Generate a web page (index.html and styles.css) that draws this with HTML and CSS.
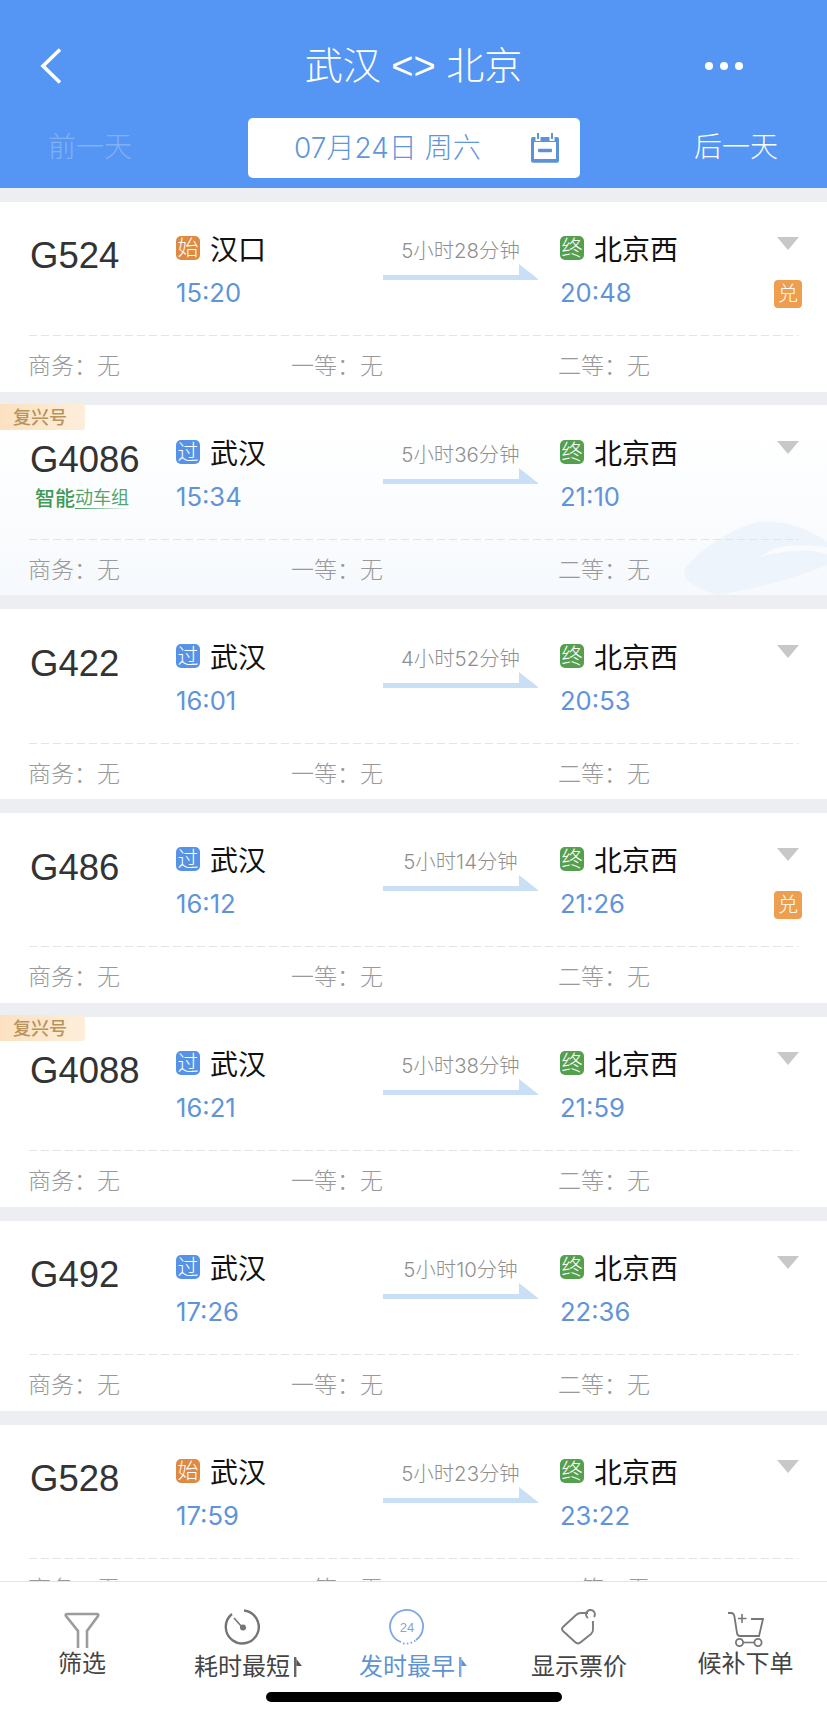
FILE: index.html
```html
<!DOCTYPE html>
<html lang="zh-CN">
<head>
<meta charset="utf-8">
<title>武汉 &lt;&gt; 北京</title>
<link rel="stylesheet" href="styles.css">
</head>
<body>
<div class="app">
  <header class="header">
    <div class="topbar">
      <svg class="back" viewBox="0 0 24 36" width="24" height="36"><path d="M21 1.500 L4 18 L21 34.500" fill="none" stroke="#fff" stroke-width="3.600"/></svg>
      <div class="title">武汉 &lt;&gt; 北京</div>
      <div class="dots"><i></i><i></i><i></i></div>
    </div>
    <div class="daterow">
      <div class="day day-prev">前一天</div>
      <div class="datebox">
        <span>07月24日 周六</span>
        <svg viewBox="0 0 30 30" width="30" height="30"><rect x="1" y="4" width="28" height="25.700" rx="2" fill="#5b93d6"/><rect x="4" y="9" width="22" height="17" fill="#fff"/><rect x="8" y="15.700" width="14" height="3.600" rx="1" fill="#5b93d6"/><path d="M8 0 V8 M22 0 V8" stroke="#fff" stroke-width="5"/><path d="M8 0 V6 M22 0 V6" stroke="#5b93d6" stroke-width="2"/></svg>
      </div>
      <div class="day day-next">后一天</div>
    </div>
  </header>

  <main class="list">
    <article class="card">
      <div class="main">
        <div class="code">G524</div>
        <div class="stop stop-from"><div class="stn"><b class="tag tag-start">始</b>汉口</div><div class="time">15:20</div></div>
        <div class="dur"><div class="dur-text">5小时28分钟</div><svg class="arrow" viewBox="0 0 155 16" width="155" height="16"><polygon points="0,11 136,11 136,0 155,15 155,16 0,16"/></svg></div>
        <div class="stop stop-to"><div class="stn"><b class="tag tag-end">终</b>北京西</div><div class="time">20:48</div></div>
        <div class="side"><span class="caret"></span><span class="exch">兑</span></div>
      </div>
      <div class="rule"></div>
      <div class="prices"><span>商务：无</span><span>一等：无</span><span>二等：无</span></div>
    </article>

    <article class="card card-smart">
      <div class="fx">复兴号</div>
      <svg class="deco" viewBox="0 0 143 74" width="143" height="74"><path d="M0 50 C5 38 40 10 73 1 C100 -2 125 8 143 21 V44 C110 58 70 68 33 74 C15 68 0 62 0 50 Z" fill="#eef4fb"/><path d="M76 36 C85 29 95 26 103 25 C120 24 132 25 143 26 V33 C130 29 118 29 109 30 C98 31 85 33 76 36 Z" fill="#f9fbfe"/></svg>
      <div class="main">
        <div class="code">G4086<div class="smart"><span class="smart-a">智能</span><span class="smart-b">动车组</span></div></div>
        <div class="stop stop-from"><div class="stn"><b class="tag tag-pass">过</b>武汉</div><div class="time">15:34</div></div>
        <div class="dur"><div class="dur-text">5小时36分钟</div><svg class="arrow" viewBox="0 0 155 16" width="155" height="16"><polygon points="0,11 136,11 136,0 155,15 155,16 0,16"/></svg></div>
        <div class="stop stop-to"><div class="stn"><b class="tag tag-end">终</b>北京西</div><div class="time">21:10</div></div>
        <div class="side"><span class="caret"></span></div>
      </div>
      <div class="rule"></div>
      <div class="prices"><span>商务：无</span><span>一等：无</span><span>二等：无</span></div>
    </article>

    <article class="card">
      <div class="main">
        <div class="code">G422</div>
        <div class="stop stop-from"><div class="stn"><b class="tag tag-pass">过</b>武汉</div><div class="time">16:01</div></div>
        <div class="dur"><div class="dur-text">4小时52分钟</div><svg class="arrow" viewBox="0 0 155 16" width="155" height="16"><polygon points="0,11 136,11 136,0 155,15 155,16 0,16"/></svg></div>
        <div class="stop stop-to"><div class="stn"><b class="tag tag-end">终</b>北京西</div><div class="time">20:53</div></div>
        <div class="side"><span class="caret"></span></div>
      </div>
      <div class="rule"></div>
      <div class="prices"><span>商务：无</span><span>一等：无</span><span>二等：无</span></div>
    </article>

    <article class="card">
      <div class="main">
        <div class="code">G486</div>
        <div class="stop stop-from"><div class="stn"><b class="tag tag-pass">过</b>武汉</div><div class="time">16:12</div></div>
        <div class="dur"><div class="dur-text">5小时14分钟</div><svg class="arrow" viewBox="0 0 155 16" width="155" height="16"><polygon points="0,11 136,11 136,0 155,15 155,16 0,16"/></svg></div>
        <div class="stop stop-to"><div class="stn"><b class="tag tag-end">终</b>北京西</div><div class="time">21:26</div></div>
        <div class="side"><span class="caret"></span><span class="exch">兑</span></div>
      </div>
      <div class="rule"></div>
      <div class="prices"><span>商务：无</span><span>一等：无</span><span>二等：无</span></div>
    </article>

    <article class="card">
      <div class="fx">复兴号</div>
      <div class="main">
        <div class="code">G4088</div>
        <div class="stop stop-from"><div class="stn"><b class="tag tag-pass">过</b>武汉</div><div class="time">16:21</div></div>
        <div class="dur"><div class="dur-text">5小时38分钟</div><svg class="arrow" viewBox="0 0 155 16" width="155" height="16"><polygon points="0,11 136,11 136,0 155,15 155,16 0,16"/></svg></div>
        <div class="stop stop-to"><div class="stn"><b class="tag tag-end">终</b>北京西</div><div class="time">21:59</div></div>
        <div class="side"><span class="caret"></span></div>
      </div>
      <div class="rule"></div>
      <div class="prices"><span>商务：无</span><span>一等：无</span><span>二等：无</span></div>
    </article>

    <article class="card">
      <div class="main">
        <div class="code">G492</div>
        <div class="stop stop-from"><div class="stn"><b class="tag tag-pass">过</b>武汉</div><div class="time">17:26</div></div>
        <div class="dur"><div class="dur-text">5小时10分钟</div><svg class="arrow" viewBox="0 0 155 16" width="155" height="16"><polygon points="0,11 136,11 136,0 155,15 155,16 0,16"/></svg></div>
        <div class="stop stop-to"><div class="stn"><b class="tag tag-end">终</b>北京西</div><div class="time">22:36</div></div>
        <div class="side"><span class="caret"></span></div>
      </div>
      <div class="rule"></div>
      <div class="prices"><span>商务：无</span><span>一等：无</span><span>二等：无</span></div>
    </article>

    <article class="card">
      <div class="main">
        <div class="code">G528</div>
        <div class="stop stop-from"><div class="stn"><b class="tag tag-start">始</b>武汉</div><div class="time">17:59</div></div>
        <div class="dur"><div class="dur-text">5小时23分钟</div><svg class="arrow" viewBox="0 0 155 16" width="155" height="16"><polygon points="0,11 136,11 136,0 155,15 155,16 0,16"/></svg></div>
        <div class="stop stop-to"><div class="stn"><b class="tag tag-end">终</b>北京西</div><div class="time">23:22</div></div>
        <div class="side"><span class="caret"></span></div>
      </div>
      <div class="rule"></div>
      <div class="prices"><span>商务：无</span><span>一等：无</span><span>二等：无</span></div>
    </article>
  </main>

  <nav class="tabbar">
    <div class="tab tab-low">
      <svg viewBox="0 0 36 36" width="36" height="36"><path d="M14 36 V19 L2 4 Q1 2 3 2 H33 Q35 2 34 4 L23 19 V36" fill="none" stroke="#9c9c9c" stroke-width="2.600"/></svg>
      <div class="label">筛选</div>
    </div>
    <div class="tab">
      <svg viewBox="0 0 36 36" width="36" height="36"><path d="M20 1.500 A16.500 16.500 0 1 1 8 5" fill="none" stroke="#757575" stroke-width="2.400"/><path d="M10 9 L18 18" stroke="#757575" stroke-width="1.600"/><circle cx="19" cy="18.500" r="3" fill="#757575"/></svg>
      <div class="label">耗时最短<svg class="sort" viewBox="0 0 8 20" width="8" height="20"><rect x="0" y="0" width="2.400" height="20" fill="#666"/><polygon points="2.400,2 8,9 2.400,9" fill="#555"/></svg></div>
    </div>
    <div class="tab tab-on">
      <svg viewBox="0 0 36 36" width="36" height="36"><path d="M27 31 A16.500 16.500 0 1 0 12 33" fill="none" stroke="#7ea8dc" stroke-width="1.800"/><path d="M14 34.500 A16.500 16.500 0 0 0 27 31" fill="none" stroke="#7ea8dc" stroke-width="1.800" stroke-dasharray="1.600 2.200"/><text x="18" y="23" text-anchor="middle" class="clock24">24</text></svg>
      <div class="label">发时最早<svg class="sort" viewBox="0 0 8 20" width="8" height="20"><rect x="0" y="0" width="2.400" height="20" fill="#7ea8dc"/><polygon points="2.400,2 8,9 2.400,9" fill="#5b93d6"/></svg></div>
    </div>
    <div class="tab">
      <svg viewBox="0 0 36 36" width="36" height="36"><path d="M27 4 H20 Q17 4 15 6 L2 18 Q0 20 2 22 L14 33 Q17 36 20 33 L30 25 Q32 23 32 21 V12" fill="none" stroke="#7d7d7d" stroke-width="1.900"/><path d="M27 9 A4.400 4.400 0 1 1 33 8" fill="none" stroke="#7d7d7d" stroke-width="1.900"/></svg>
      <div class="label">显示票价</div>
    </div>
    <div class="tab tab-low">
      <svg viewBox="0 0 36 36" width="36" height="36"><path d="M0 1 H3 Q6 1 6.500 5 L9 21 Q9.500 24 12 24 H31 L35 7 H23" fill="none" stroke="#777" stroke-width="1.800"/><path d="M14 2 V11 M10 6.500 H18.500" stroke="#777" stroke-width="1.600"/><circle cx="11.500" cy="30.500" r="3.600" fill="none" stroke="#777" stroke-width="1.800"/><circle cx="30" cy="30.500" r="3.600" fill="none" stroke="#777" stroke-width="1.800"/><path d="M15 30.500 H26.400" stroke="#777" stroke-width="1.600"/></svg>
      <div class="label">候补下单</div>
    </div>
  </nav>
  <div class="home"></div>
</div>
</body>
</html>
```

FILE: styles.css
```css
* { box-sizing: border-box; }
html, body { margin: 0; padding: 0; }
body {
  width: 827px;
  height: 1716px;
  overflow: hidden;
  background: #eceef2;
  font-family: "Liberation Sans", "Noto Sans CJK SC", sans-serif;
}
.app {
  position: relative;
  display: flex;
  flex-direction: column;
  width: 827px;
  height: 1716px;
}

/* header */
.header {
  flex: none;
  height: 188px;
  padding-top: 14px;
  background: #5596f5;
  color: #fff;
}
.topbar {
  display: grid;
  grid-template-columns: 1fr auto 1fr;
  align-items: center;
  height: 104px;
}
.back { margin-left: 39px; display: block; }
.title { font-size: 38px; line-height: 50px; font-weight: 300; }
.dots { display: flex; gap: 7px; justify-self: end; margin-right: 84px; }
.dots i { width: 8px; height: 8px; border-radius: 50%; background: #fff; display: block; }
.daterow { display: flex; align-items: center; height: 60px; }
.day { font-size: 28px; line-height: 60px; font-weight: 300; }
.day-prev { width: 248px; padding-left: 48px; color: #80b0f5; }
.day-next { padding-left: 114px; }
.datebox {
  display: flex;
  align-items: center;
  justify-content: space-between;
  width: 332px;
  height: 60px;
  padding: 0 20px 0 46px;
  background: #fff;
  border-radius: 5px;
  color: #5f96dc;
  font-family: Inter, "Noto Sans CJK SC", sans-serif;
  font-size: 28px;
  font-weight: 300;
}
.datebox span { line-height: 1; }

/* list */
.list {
  flex: 1;
  min-height: 0;
  overflow: hidden;
  padding-top: 13.670px;
}
.card {
  position: relative;
  height: 190px;
  margin-bottom: 13.830px;
  background: #fff;
}
.card-smart { background: linear-gradient(#fff 25px, #f6f9fd 100%); }
.main {
  position: relative;
  display: flex;
  height: 133.330px;
  margin: 0 28px 0 29px;
}
.code {
  flex: none;
  width: 147px;
  padding: 32.500px 0 0 1px;
  font-size: 36.500px;
  line-height: 44px;
  color: #333;
}
.smart {
  display: flex;
  align-items: flex-end;
  width: 97px;
  margin: 6px 0 0 5px;
  height: 21px;
  color: #3e9a55;
  line-height: 20px;
}
.smart-a { font-size: 20px; font-weight: 500; }
.smart-b {
  font-size: 18px;
  color: #55a56a;
  border-bottom: 1px solid;
  border-image: linear-gradient(90deg, #3e9a55, #ffffff00) 1;
  line-height: 20px;
}
.stop { flex: none; padding-top: 34.330px; }
.stop-from { width: 207px; }
.stop-to { width: 214px; margin-left: 22px; }
.stn {
  display: flex;
  align-items: center;
  gap: 10px;
  height: 24px;
  font-size: 28px;
  color: #111;
}
.tag {
  flex: none;
  width: 24px;
  height: 24px;
  border-radius: 5px;
  color: #fff;
  font-size: 21px;
  font-weight: 300;
  line-height: 24px;
  text-align: center;
}
.tag-start { background: #df8a43; }
.tag-pass { background: #5692e6; }
.tag-end { background: #55a04f; }
.time {
  margin-top: 18px;
  font-family: Inter, "Liberation Sans", sans-serif;
  font-size: 25.600px;
  line-height: 30px;
  color: #5f94d8;
}
.dur { flex: none; width: 155px; padding-top: 37.330px; }
.dur-text {
  font-family: Inter, "Noto Sans CJK SC", sans-serif;
  font-size: 20.400px;
  font-weight: 300;
  line-height: 24px;
  color: #8f8f8f;
  text-align: center;
}
.arrow { display: block; margin-top: 1px; fill: #c9dff5; }
.side {
  flex: 1;
  display: flex;
  flex-direction: column;
  align-items: flex-end;
  padding-top: 35.330px;
}
.caret {
  width: 0;
  height: 0;
  border-top: 13px solid #c8c8c8;
  border-left: 11px solid transparent;
  border-right: 11px solid transparent;
}
.exch {
  width: 28px;
  height: 28px;
  margin: 30px -3px 0 0;
  border-radius: 4px;
  background: #ee9e4f;
  color: #fff;
  font-size: 20px;
  font-weight: 300;
  line-height: 28px;
  text-align: center;
}
.rule {
  position: relative;
  height: 1px;
  margin: 0 28px 0 29px;
  background: repeating-linear-gradient(90deg, #e4e4e4 0 8px, transparent 8px 12px);
}
.prices {
  position: relative;
  display: grid;
  grid-template-columns: 263px 267px 1fr;
  padding: 15px 0 0 28px;
  font-size: 23px;
  line-height: 30px;
  color: #999;
  font-weight: 300;
}
.fx {
  position: absolute;
  top: -1.500px;
  left: 0;
  width: 85px;
  height: 26px;
  padding-left: 13px;
  border-radius: 0 3px 3px 0;
  background: linear-gradient(90deg, #fbe1c0, #fdeeda);
  color: #b8935e;
  font-size: 18px;
  font-weight: 500;
  line-height: 29px;
  z-index: 1;
}
.deco { position: absolute; right: 0; bottom: 0; }

/* tab bar */
.tabbar {
  position: relative;
  flex: none;
  display: grid;
  grid-template-columns: 164px 156px 174px 170px 163px;
  height: 135px;
  background: #fff;
  border-top: 1px solid #e4e4e4;
}
.tab {
  display: flex;
  flex-direction: column;
  align-items: center;
  padding-top: 27px;
  color: #444;
}
.tab svg { display: block; }
.tab .label {
  position: relative;
  margin-top: 7px;
  font-size: 24px;
  line-height: 30px;
}
.tab-low { padding-top: 30px; }
.tab-low .label { margin-top: 1px; }
.tab-on .label { color: #5f94d0; }
.clock24 { font-size: 13px; fill: #7ea8dc; font-family: "Liberation Sans", sans-serif; }
.tab .sort { position: absolute; right: -12px; top: 5px; }
.home {
  position: absolute;
  left: 266px;
  top: 1692px;
  width: 296px;
  height: 10px;
  border-radius: 5px;
  background: #000;
}
```
